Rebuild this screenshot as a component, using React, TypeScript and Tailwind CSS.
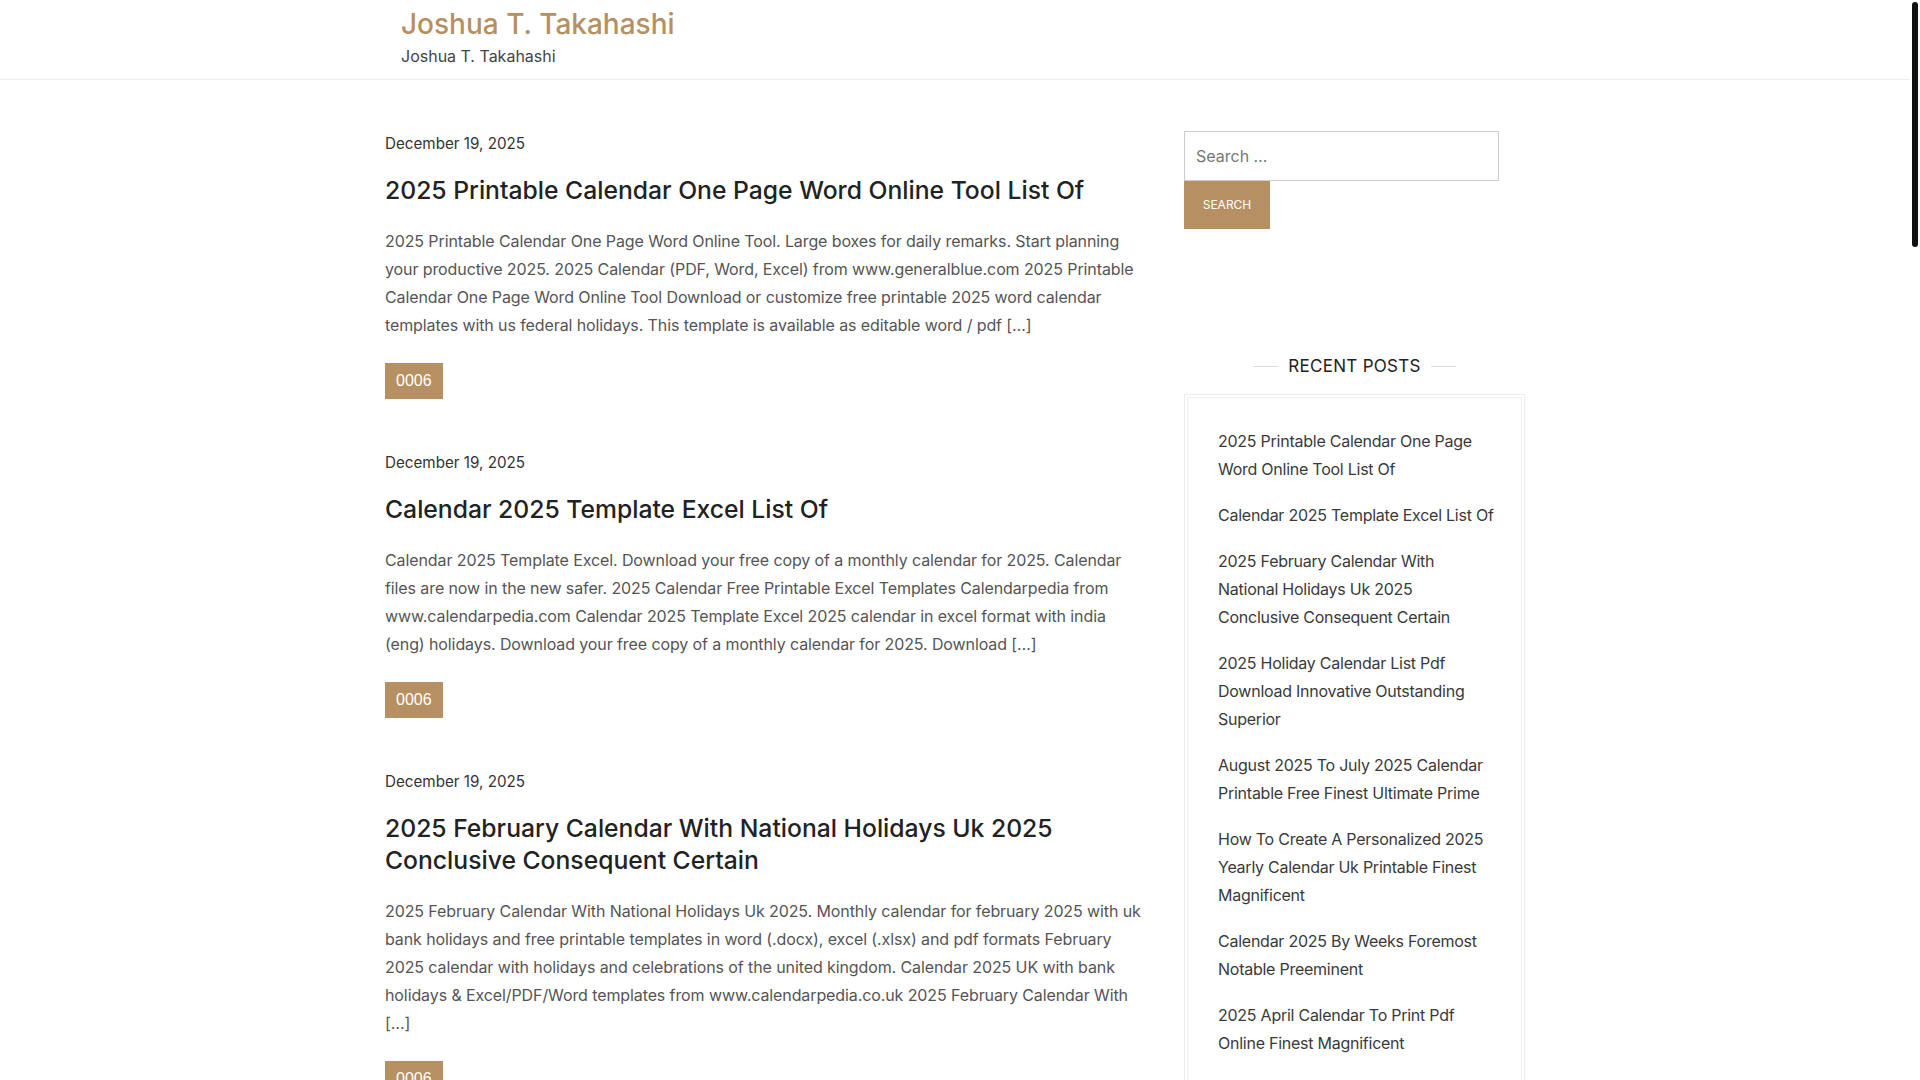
import React from "react";

const posts = [
  {
    title: ["2025 Printable Calendar One Page Word Online Tool List Of"],
    body: [
      "2025 Printable Calendar One Page Word Online Tool. Large boxes for daily remarks. Start planning",
      "your productive 2025. 2025 Calendar (PDF, Word, Excel) from www.generalblue.com 2025 Printable",
      "Calendar One Page Word Online Tool Download or customize free printable 2025 word calendar",
      "templates with us federal holidays. This template is available as editable word / pdf [\u2026]",
    ],
  },
  {
    title: ["Calendar 2025 Template Excel List Of"],
    body: [
      "Calendar 2025 Template Excel. Download your free copy of a monthly calendar for 2025. Calendar",
      "files are now in the new safer. 2025 Calendar Free Printable Excel Templates Calendarpedia from",
      "www.calendarpedia.com Calendar 2025 Template Excel 2025 calendar in excel format with india",
      "(eng) holidays. Download your free copy of a monthly calendar for 2025. Download [\u2026]",
    ],
  },
  {
    title: ["2025 February Calendar With National Holidays Uk 2025", "Conclusive Consequent Certain"],
    body: [
      "2025 February Calendar With National Holidays Uk 2025. Monthly calendar for february 2025 with uk",
      "bank holidays and free printable templates in word (.docx), excel (.xlsx) and pdf formats February",
      "2025 calendar with holidays and celebrations of the united kingdom. Calendar 2025 UK with bank",
      "holidays & Excel/PDF/Word templates from www.calendarpedia.co.uk 2025 February Calendar With",
      "[\u2026]",
    ],
  },
];

const recent = [
  ["2025 Printable Calendar One Page", "Word Online Tool List Of"],
  ["Calendar 2025 Template Excel List Of"],
  ["2025 February Calendar With", "National Holidays Uk 2025", "Conclusive Consequent Certain"],
  ["2025 Holiday Calendar List Pdf", "Download Innovative Outstanding", "Superior"],
  ["August 2025 To July 2025 Calendar", "Printable Free Finest Ultimate Prime"],
  ["How To Create A Personalized 2025", "Yearly Calendar Uk Printable Finest", "Magnificent"],
  ["Calendar 2025 By Weeks Foremost", "Notable Preeminent"],
  ["2025 April Calendar To Print Pdf", "Online Finest Magnificent"],
];

export default function App() {
  return (
    <div className="min-h-screen bg-white pr-[10px] font-['Inter','Noto_Sans',sans-serif]">
      <header className="border-b border-[#ececec]">
        <div className="mx-auto w-[1140px] px-4 pt-[6px] pb-[11px]">
          <div className="text-[28px] leading-[36px] font-medium text-[#b69062]">Joshua T. Takahashi</div>
          <div className="mt-[2px] text-[16px] leading-[24px] text-[#444]">Joshua T. Takahashi</div>
        </div>
      </header>

      <div className="mx-auto flex w-[1140px] justify-between pt-[50px]">
        <main className="w-[750px]">
          {posts.map((p, i) => (
            <article key={i} className="mb-[50px]">
              <div className="text-[15.2px] leading-[28px] text-[#333]">December 19, 2025</div>
              <h2 className="mt-[16px] text-[24.7px] leading-[32px] font-medium text-[#222]">
                {p.title.map((t, j) => (
                  <span key={j} className="block whitespace-nowrap">{t}</span>
                ))}
              </h2>
              <p className="mt-[21px] text-[16px] leading-[28px] tracking-[-0.1px] text-[#555]">
                {p.body.map((t, j) => (
                  <span key={j} className="block whitespace-nowrap">{t}</span>
                ))}
              </p>
              <div className="mt-[24px]">
                <span className="inline-block h-[36px] bg-[#b69062] px-[11px] font-['Liberation_Sans',sans-serif] text-[16px] leading-[36px] text-white">
                  0006
                </span>
              </div>
            </article>
          ))}
        </main>

        <aside className="w-[341px]">
          <form className="mt-[1px]" onSubmit={(e) => e.preventDefault()}>
            <input
              type="search"
              placeholder={"Search \u2026"}
              className="block h-[50px] w-[315px] border border-[#cccccc] bg-white px-[11px] text-[16px] text-[#333] placeholder:text-[#777] outline-none"
            />
            <button
              type="submit"
              className="block h-[48px] w-[86px] bg-[#b69062] text-[12px] uppercase text-white"
            >
              Search
            </button>
          </form>

          <div className="mt-[125px] flex items-center justify-center gap-[10px]">
            <span className="h-px w-[25px] bg-[#dddddd]" />
            <h3 className="text-[17px] leading-[24px] uppercase tracking-[0.3px] text-[#222]">Recent Posts</h3>
            <span className="h-px w-[25px] bg-[#dddddd]" />
          </div>

          <div className="mt-[16px] border border-[#ededed] p-[2px]">
            <ul className="border border-[#f0f0f0] pt-[29px] pl-[30px] pr-[20px] pb-[20px]">
              {recent.map((r, i) => (
                <li key={i} className="mb-[18px] text-[16px] leading-[28px] tracking-[-0.25px] text-[#3a3a3a]">
                  {r.map((t, j) => (
                    <span key={j} className="block whitespace-nowrap">{t}</span>
                  ))}
                </li>
              ))}
            </ul>
          </div>
        </aside>
      </div>

      <div className="fixed right-[2px] top-[2px] h-[245px] w-[6px] rounded-full bg-[#111]" />
    </div>
  );
}
